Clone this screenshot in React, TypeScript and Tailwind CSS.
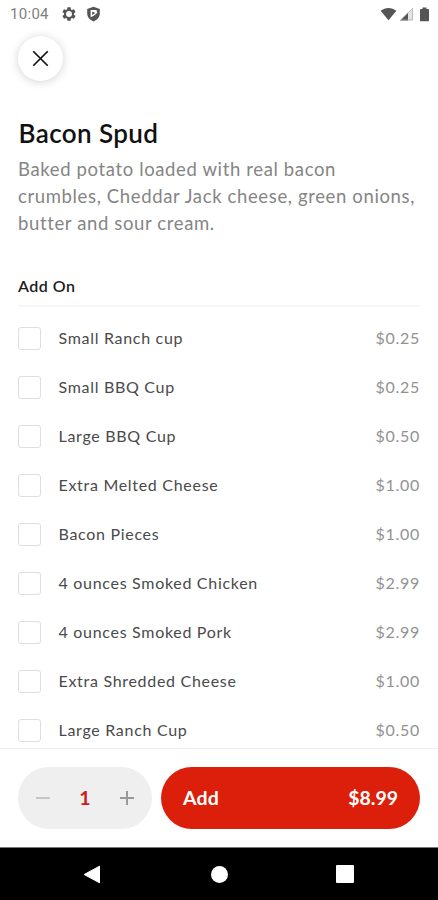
type AddOn = {
  name: string;
  price: string;
};

const addOns: AddOn[] = [
  { name: "Small Ranch cup", price: "$0.25" },
  { name: "Small BBQ Cup", price: "$0.25" },
  { name: "Large BBQ Cup", price: "$0.50" },
  { name: "Extra Melted Cheese", price: "$1.00" },
  { name: "Bacon Pieces", price: "$1.00" },
  { name: "4 ounces Smoked Chicken", price: "$2.99" },
  { name: "4 ounces Smoked Pork", price: "$2.99" },
  { name: "Extra Shredded Cheese", price: "$1.00" },
  { name: "Large Ranch Cup", price: "$0.50" },
];

function StatusBar() {
  return (
    <div className="flex h-7 shrink-0 items-center pr-[8px] pl-[10px] text-[#555]">
      <span className="w-[51px] pt-px font-['Roboto',sans-serif] text-[15px] leading-none tracking-[0.3px] text-[#808080]">
        10:04
      </span>
      {/* Settings gear */}
      <svg width="16" height="16" viewBox="0 0 24 24" fill="currentColor">
        <path d="M19.43 12.98c.04-.32.07-.64.07-.98s-.03-.66-.07-.98l2.11-1.65a.5.5 0 0 0 .12-.64l-2-3.46a.5.5 0 0 0-.61-.22l-2.49 1a7.3 7.3 0 0 0-1.69-.98l-.38-2.65A.49.49 0 0 0 14 2h-4a.49.49 0 0 0-.49.42l-.38 2.65c-.61.25-1.17.59-1.69.98l-2.49-1a.5.5 0 0 0-.61.22l-2 3.46a.5.5 0 0 0 .12.64l2.11 1.65c-.04.32-.07.65-.07.98s.03.66.07.98l-2.11 1.65a.5.5 0 0 0-.12.64l2 3.46c.12.22.39.3.61.22l2.49-1c.52.4 1.08.73 1.69.98l.38 2.65c.03.24.24.42.49.42h4c.25 0 .46-.18.49-.42l.38-2.65c.61-.25 1.17-.59 1.69-.98l2.49 1c.23.09.49 0 .61-.22l2-3.46a.5.5 0 0 0-.12-.64l-2.11-1.65ZM12 16.400a4.400 4.400 0 1 1 0-8.800 4.400 4.400 0 0 1 0 8.800Z" />
      </svg>
      {/* Play Protect shield */}
      <svg className="ml-[9px]" width="15" height="16" viewBox="0 0 15 16">
        <path d="M7.500 .8 13.800 3v4.600c0 3.600-2.600 6.500-6.300 7.900C3.800 14.100 1.200 11.200 1.200 7.600V3Z" fill="currentColor" />
        <path d="M4.600 4.100H10.400L11.300 6.800 7.800 9.800 4.600 11.200Z" fill="#fff" />
        <path d="M6.200 5.400 9.400 7.100 6.200 8.900Z" fill="currentColor" />
      </svg>
      <div className="ml-auto flex items-center">
        <svg width="17" height="14" viewBox="0 0 17 14">
          <path d="M.6 3.800C5.200-.1 11.800-.1 16.400 3.800L8.500 13.300Z" fill="currentColor" />
        </svg>
        <svg className="ml-[2px]" width="15" height="14" viewBox="0 0 15 14">
          <path d="M14 .6V13.400H1Z" fill="#e4e4e4" />
          <path d="M9 5.500V13.400H1Z" fill="currentColor" />
          <path d="M13.500 1.600V13H1.800Z" fill="none" stroke="#aaa" strokeWidth=".7" />
        </svg>
        <svg className="ml-[5px]" width="11" height="15" viewBox="0 0 11 15">
          <path d="M3.500 .5h4v1.400h1.700q.8 0 .8 1v10.500q0 .9-.8.9H1.800q-.8 0-.8-.9V2.900q0-1 .8-1h1.700Z" fill="currentColor" />
        </svg>
      </div>
    </div>
  );
}

function AddOnRow({ name, price }: AddOn) {
  return (
    <li className="flex h-[49px] shrink-0 items-center text-[16px] leading-[20px]">
      <span className="h-[23px] w-[23px] rounded-[3px] border border-[#dedede] bg-white" />
      <span className="ml-[17.500px] pb-px tracking-[0.7px] text-[#4a4a4a]">{name}</span>
      <span className="ml-auto pb-px tracking-[0.7px] text-[#929292]">{price}</span>
    </li>
  );
}

function NavBar() {
  return (
    <div className="flex h-[53px] shrink-0 items-center border-t border-[#777] bg-black pl-[83px]">
      <svg width="18" height="19" viewBox="0 0 18 19">
        <path d="M16.500 1.200V17.800L1.200 9.500Z" fill="#fff" stroke="#fff" strokeWidth="1" strokeLinejoin="round" />
      </svg>
      <span className="ml-[110px] h-[17px] w-[17px] rounded-full bg-white" />
      <span className="ml-[108px] h-[18px] w-[18px] rounded-[1px] bg-white" />
    </div>
  );
}

export default function App() {
  return (
    <div className="flex h-[900px] w-[438px] flex-col overflow-hidden bg-white font-['Lato',sans-serif]">
      <StatusBar />

      <main className="flex min-h-0 flex-1 flex-col overflow-hidden px-[18px] pt-2">
        <button className="flex h-[45px] w-[45px] shrink-0 items-center justify-center rounded-full bg-white shadow-[0_1px_10px_rgba(0,0,0,0.18)]">
          <svg width="17" height="17" viewBox="0 0 18 18" fill="none" stroke="#111" strokeWidth="1.800">
            <path d="M1.300 1.300 16.700 16.700M16.700 1.300 1.300 16.700" />
          </svg>
        </button>

        <h1 className="mt-[36px] pl-[0.500px] text-[26px] leading-[32px] font-semibold tracking-[0.4px] text-[#111]">
          Bacon Spud
        </h1>
        <p className="mt-[7px] text-[18.500px] leading-[27px] tracking-[0.630px] whitespace-nowrap text-[#858585]">
          Baked potato loaded with real bacon
          <br />
          crumbles, Cheddar Jack cheese, green onions,
          <br />
          butter and sour cream.
        </p>

        <h2 className="mt-[37px] text-[16px] leading-[24px] font-semibold tracking-[0.5px] text-[#1c1c1c]">Add On</h2>
        <div className="mt-[7px] h-[2px] shrink-0 bg-[#f7f7f7]" />

        <ul className="mt-[7px] flex flex-col">
          {addOns.map((item) => (
            <AddOnRow key={item.name} {...item} />
          ))}
        </ul>
      </main>

      <footer className="flex h-[99px] shrink-0 gap-[9px] border-t border-[#eee] px-[18px] pt-[18px]">
        <div className="flex h-[62px] w-[134px] items-center justify-between rounded-full bg-[#efefef] px-[18px]">
          <svg width="14" height="14" viewBox="0 0 14 14" stroke="#c2c2c2" strokeWidth="1.800">
            <path d="M0 7H14" />
          </svg>
          <span className="text-[19.500px] font-bold text-[#d11a1a]">1</span>
          <svg width="14" height="14" viewBox="0 0 14 14" stroke="#999" strokeWidth="2">
            <path d="M0 7H14M7 0V14" />
          </svg>
        </div>
        <button className="flex h-[62px] flex-1 items-center justify-between rounded-full bg-[#db1f0a] px-[22px] text-[19.500px] font-bold text-white">
          <span className="tracking-[0.2px]">Add</span>
          <span>$8.99</span>
        </button>
      </footer>

      <NavBar />
    </div>
  );
}
